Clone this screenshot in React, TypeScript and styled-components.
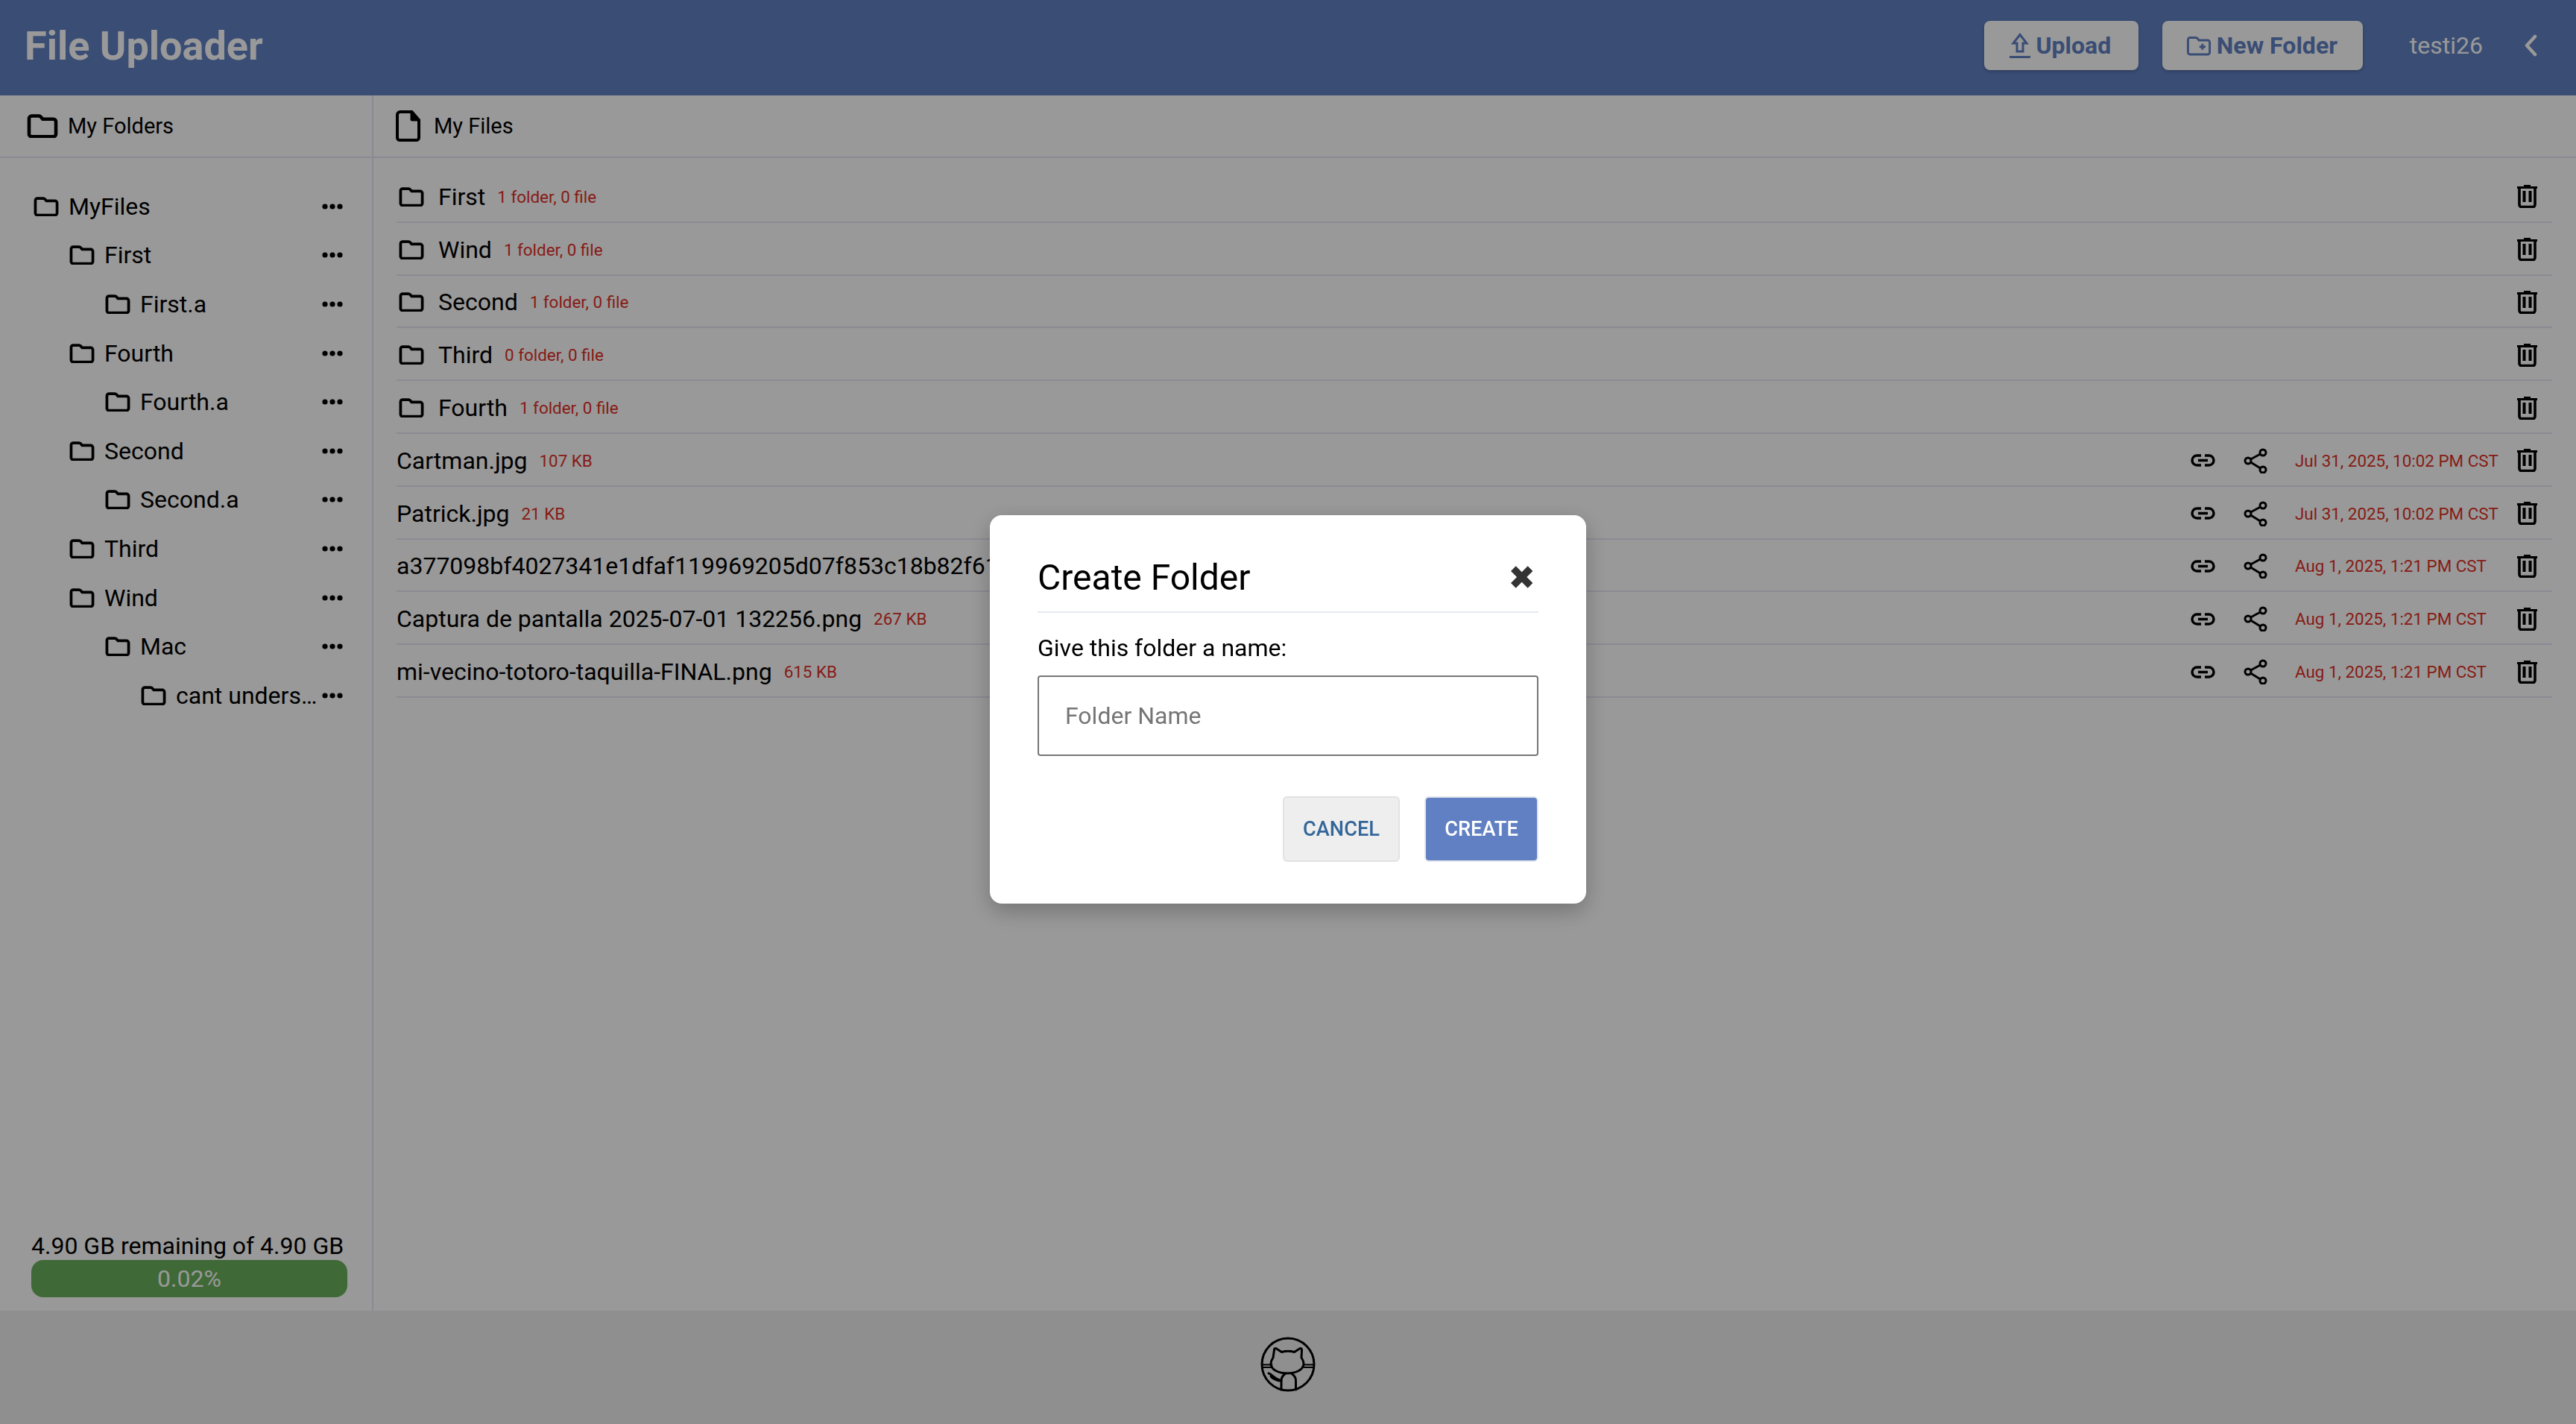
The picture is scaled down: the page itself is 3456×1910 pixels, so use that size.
import React from 'react';
import styled, { createGlobalStyle } from 'styled-components';

const GlobalStyle = createGlobalStyle`
  * { box-sizing: border-box; }
  html, body { margin: 0; padding: 0; background: #fff; }
  body { font-family: Roboto, "Liberation Sans", sans-serif; color: #000; }
`;

const Page = styled.div`
  height: 1910px;
  display: flex;
  flex-direction: column;
`;

const Header = styled.header`
  height: 128px;
  flex: none;
  background: #6180c3;
  display: flex;
  align-items: center;
  padding: 0 52px 6px 33px;
  color: #fff;
`;

const Logo = styled.h1`
  margin: 0;
  font-size: 54px;
  font-weight: 700;
  flex: 1;
`;

const HeaderButton = styled.button<{ $width: number }>`
  width: ${(p) => p.$width}px;
  height: 66px;
  background: #fff;
  color: #6180c3;
  border: none;
  border-radius: 8px;
  font: 700 32px Roboto, sans-serif;
  display: flex;
  align-items: center;
  justify-content: center;
  gap: 7px;
  padding: 0 2px 0 0;
  margin-right: 32px;
  box-shadow: 0 2px 4px rgba(0, 0, 0, 0.2);
`;

const UserName = styled.span`
  font-size: 32px;
  margin-left: 31px;
  margin-right: 55px;
`;

const Content = styled.div`
  flex: 1;
  display: flex;
  min-height: 0;
`;

const Sidebar = styled.aside`
  width: 501px;
  flex: none;
  border-right: 2px solid #e6e6f5;
  display: flex;
  flex-direction: column;
`;

const PanelTitle = styled.div<{ $gap: number; $left: number }>`
  height: 84px;
  flex: none;
  border-bottom: 2px solid #e6e6f5;
  display: flex;
  align-items: center;
  gap: ${(p) => p.$gap}px;
  padding-left: ${(p) => p.$left}px;
  font-size: 29px;
`;

const Tree = styled.ul`
  list-style: none;
  margin: 0;
  padding: 32px 0 0;
  flex: 1;
`;

const TreeRow = styled.li<{ $depth: number }>`
  height: 65.6px;
  display: flex;
  align-items: center;
  padding-left: ${(p) => 45 + p.$depth * 48}px;
  padding-right: 39px;
  font-size: 32px;
`;

const TreeLabel = styled.span`
  flex: 1;
  min-width: 0;
  margin-left: 13px;
  white-space: nowrap;
  overflow: hidden;
  text-overflow: ellipsis;
`;

const Storage = styled.div`
  flex: none;
  padding: 0 33px 18px 42px;
  font-size: 32px;
`;

const StorageText = styled.div`
  height: 38px;
  line-height: 38px;
  white-space: nowrap;
`;

const StorageBar = styled.div`
  height: 50px;
  border-radius: 16px;
  background: #69af5d;
  color: #fff;
  display: flex;
  align-items: center;
  justify-content: center;
`;

const Main = styled.main`
  flex: 1;
  min-width: 0;
  display: flex;
  flex-direction: column;
`;

const List = styled.div`
  padding: 16px 32px 0 31px;
`;

const Row = styled.div`
  height: 70.8px;
  border-bottom: 2px solid #e6e6f5;
  display: flex;
  align-items: center;
  padding: 3px 20px 0 0;
  font-size: 32px;
  white-space: nowrap;
`;

const RowFolder = styled.span`
  margin-left: 3px;
  display: flex;
`;

const FolderName = styled.span`
  margin-left: 19px;
`;

const Meta = styled.span`
  margin-left: 16px;
  font-size: 22.4px;
  color: #df3026;
  flex: 1;
`;

const DateText = styled.span`
  width: 298px;
  font-size: 22.4px;
  color: #df3026;
  flex: none;
`;

const ActionSlot = styled.span<{ $width: number }>`
  width: ${(p) => p.$width}px;
  flex: none;
  display: flex;
  justify-content: flex-start;
`;

const RowIcons = styled.span`
  display: flex;
  align-items: center;
`;

const Footer = styled.footer`
  height: 152px;
  flex: none;
  background: #eee;
  display: flex;
  align-items: center;
  justify-content: center;
  padding-bottom: 8px;
`;

const Overlay = styled.div`
  position: fixed;
  inset: 0;
  background: rgba(0, 0, 0, 0.4);
  display: flex;
  align-items: center;
  justify-content: center;
  padding-bottom: 7px;
`;

const Modal = styled.div`
  width: 800px;
  height: 521px;
  background: #fff;
  border-radius: 16px;
  padding: 0 64px;
  box-shadow: 0 10px 30px rgba(0, 0, 0, 0.25);
`;

const ModalHead = styled.div`
  height: 131px;
  border-bottom: 2px solid #e5e9ee;
  display: flex;
  align-items: flex-end;
  justify-content: space-between;
  padding-bottom: 17px;
`;

const ModalTitle = styled.h2`
  margin: 0;
  font-size: 48px;
  font-weight: 400;
`;

const CloseGlyph = styled.span`
  font: 44px/56px "DejaVu Sans", sans-serif;
  color: #333;
  margin-right: 4px;
`;

const FieldLabel = styled.label`
  display: block;
  margin-top: 28px;
  font-size: 32px;
  line-height: 38px;
`;

const NameInput = styled.input`
  display: block;
  width: 100%;
  height: 108px;
  margin-top: 18px;
  padding: 0 35px;
  border: 2px solid #767676;
  border-radius: 4px;
  outline: none;
  font: 32px Roboto, sans-serif;
  &::placeholder {
    color: #757575;
  }
`;

const ModalActions = styled.div`
  display: flex;
  justify-content: flex-end;
  gap: 33px;
  margin-top: 54px;
`;

const ModalButton = styled.button<{ $primary?: boolean }>`
  height: 88px;
  width: ${(p) => (p.$primary ? 153 : 157)}px;
  padding: 0;
  border: 2px solid ${(p) => (p.$primary ? '#e3e6ee' : '#e2e2e4')};
  border-radius: 6px;
  background: ${(p) => (p.$primary ? '#6180c3' : '#eee')};
  color: ${(p) => (p.$primary ? '#fff' : '#336699')};
  font: 500 27.2px Roboto, sans-serif;
`;

const Line = styled.svg<{ $w: number; $h: number }>`
  width: ${(p) => p.$w}px;
  height: ${(p) => p.$h}px;
  flex: none;
  display: block;
  fill: none;
  stroke: currentColor;
`;

const Dots = styled.svg`
  width: 28px;
  height: 8px;
  flex: none;
  display: block;
  fill: #000;
`;

const FOLDER =
  'M3 6a3.5 3.5 0 0 1 3.5-3.5h9.6a3.5 3.5 0 0 1 2.6 1.2l2.6 3h14.2a3.5 3.5 0 0 1 3.5 3.5v16.6a3.5 3.5 0 0 1-3.5 3.5h-29A3.5 3.5 0 0 1 3 26.3z';

const FolderIcon = ({ w = 34, h = 26 }: { w?: number; h?: number }) => (
  <Line $w={w} $h={h} viewBox="0 0 42 32" strokeWidth="4.6">
    <path d={FOLDER} />
  </Line>
);

const FileIcon = () => (
  <Line $w={33} $h={42} viewBox="0 0 33 42" strokeWidth="4">
    <path d="M6 2h15.5L31 13v23.5a3.5 3.5 0 0 1-3.5 3.5H5.5A3.5 3.5 0 0 1 2 36.5V6a4 4 0 0 1 4-4z" />
    <path d="M20 3v9.5a1.5 1.5 0 0 0 1.5 1.5H31z" fill="currentColor" strokeWidth="1" />
  </Line>
);

const TrashIcon = () => (
  <Line $w={27} $h={31} viewBox="0 0 27 31" strokeWidth="3">
    <path d="M9 1h9M0 3.5h27" strokeWidth="3" />
    <path d="M3 4v22.5a3 3 0 0 0 3 3h15a3 3 0 0 0 3-3V4" strokeWidth="3.6" />
    <path d="M9.5 8v15M17.5 8v15" strokeWidth="4" />
  </Line>
);

const LinkIcon = () => (
  <Line $w={33} $h={17} viewBox="0 0 33 17" strokeWidth="3.4">
    <path d="M14 2H8.5a6.5 6.5 0 0 0 0 13H14M19 2h5.5a6.5 6.5 0 0 1 0 13H19M10 8.5h13" />
  </Line>
);

const ShareIcon = () => (
  <Line $w={32} $h={34} viewBox="0 0 32 34" strokeWidth="3">
    <circle cx="26" cy="6" r="4" />
    <circle cx="6" cy="17" r="4" />
    <circle cx="26" cy="29" r="4" />
    <path d="M9.5 15 22.5 8M9.5 19l13 8" />
  </Line>
);

const DotsIcon = () => (
  <Dots viewBox="0 0 28 8">
    <circle cx="4" cy="4" r="3.6" />
    <circle cx="14" cy="4" r="3.6" />
    <circle cx="24" cy="4" r="3.6" />
  </Dots>
);

const UploadIcon = () => (
  <Line $w={28} $h={34} viewBox="0 0 28 34" strokeWidth="3">
    <path d="M14 2.5 23 14h-5v11h-8V14H5z" />
    <path d="M0 32.5h28" />
  </Line>
);

const NewFolderIcon = () => (
  <Line $w={34} $h={27} viewBox="0 0 42 32" strokeWidth="3.6">
    <path d={FOLDER} />
    <path d="M27 12.5v10M22 17.5h10" />
  </Line>
);

const ChevronIcon = () => (
  <Line $w={18} $h={30} viewBox="0 0 18 30" strokeWidth="4.5" strokeLinecap="round" strokeLinejoin="round">
    <path d="M15 3 4 15l11 12" />
  </Line>
);

// outlined octocat inside a ring, traced from the footer of the app
const GithubIcon = () => (
  <Line $w={74} $h={74} viewBox="0 0 74 74" strokeWidth="3" strokeLinejoin="round" strokeLinecap="round">
    <circle cx="37" cy="37" r="35" />
    <path d="M18.5 18c-.5-2 1.500-3 3-2l7 4.500c5-1.500 12-1.500 17 0l7-4.500c1.500-1 3.500 0 3 2l-.5 10c2 3 3 6 3 8 0 8-10 13-22 13s-22-5-22-13c0-2 1-5 3-8z" />
    <path d="M28 71V59c0-5 3-8 6-10M47.500 71V59c0-5-3-8-6-10" />
    <path d="M11 49c5 1 6 7 17 10M14 53c2 3 6 5 11 6" />
    <path d="M2 37.500h13.500M2 41h13.500M58.500 37.500H72M58.500 41H72" strokeWidth="1.800" />
  </Line>
);

const tree: [string, number][] = [
  ['MyFiles', 0],
  ['First', 1],
  ['First.a', 2],
  ['Fourth', 1],
  ['Fourth.a', 2],
  ['Second', 1],
  ['Second.a', 2],
  ['Third', 1],
  ['Wind', 1],
  ['Mac', 2],
  ['cant understand this', 3],
];

const folders = [
  ['First', '1 folder, 0 file'],
  ['Wind', '1 folder, 0 file'],
  ['Second', '1 folder, 0 file'],
  ['Third', '0 folder, 0 file'],
  ['Fourth', '1 folder, 0 file'],
];

const files = [
  ['Cartman.jpg', '107 KB', 'Jul 31, 2025, 10:02 PM CST'],
  ['Patrick.jpg', '21 KB', 'Jul 31, 2025, 10:02 PM CST'],
  ['a377098bf4027341e1dfaf119969205d07f853c18b82f61a0c.jpg', '98 KB', 'Aug 1, 2025, 1:21 PM CST'],
  ['Captura de pantalla 2025-07-01 132256.png', '267 KB', 'Aug 1, 2025, 1:21 PM CST'],
  ['mi-vecino-totoro-taquilla-FINAL.png', '615 KB', 'Aug 1, 2025, 1:21 PM CST'],
];

const App: React.FC = () => {
  return (
    <Page>
      <GlobalStyle />
      <Header>
        <Logo>File Uploader</Logo>
        <HeaderButton $width={207}>
          <UploadIcon />
          Upload
        </HeaderButton>
        <HeaderButton $width={269}>
          <NewFolderIcon />
          New Folder
        </HeaderButton>
        <UserName>testi26</UserName>
        <ChevronIcon />
      </Header>
      <Content>
        <Sidebar>
          <PanelTitle $gap={13} $left={36}>
            <FolderIcon w={42} h={32} />
            My Folders
          </PanelTitle>
          <Tree>
            {tree.map(([name, depth]) => (
              <TreeRow key={name} $depth={depth}>
                <FolderIcon />
                <TreeLabel>{name}</TreeLabel>
                <DotsIcon />
              </TreeRow>
            ))}
          </Tree>
          <Storage>
            <StorageText>4.90 GB remaining of 4.90 GB</StorageText>
            <StorageBar>0.02%</StorageBar>
          </Storage>
        </Sidebar>
        <Main>
          <PanelTitle $gap={18} $left={30}>
            <FileIcon />
            My Files
          </PanelTitle>
          <List>
            {folders.map(([name, info]) => (
              <Row key={name}>
                <RowFolder>
                  <FolderIcon />
                </RowFolder>
                <FolderName>{name}</FolderName>
                <Meta>{info}</Meta>
                <TrashIcon />
              </Row>
            ))}
            {files.map(([name, size, date]) => (
              <Row key={name}>
                {name}
                <Meta>{size}</Meta>
                <RowIcons>
                  <ActionSlot $width={71}>
                    <LinkIcon />
                  </ActionSlot>
                  <ActionSlot $width={69}>
                    <ShareIcon />
                  </ActionSlot>
                  <DateText>{date}</DateText>
                  <TrashIcon />
                </RowIcons>
              </Row>
            ))}
          </List>
        </Main>
      </Content>
      <Footer>
        <GithubIcon />
      </Footer>
      <Overlay>
        <Modal>
          <ModalHead>
            <ModalTitle>Create Folder</ModalTitle>
            <CloseGlyph>✖</CloseGlyph>
          </ModalHead>
          <FieldLabel>Give this folder a name:</FieldLabel>
          <NameInput placeholder="Folder Name" />
          <ModalActions>
            <ModalButton>CANCEL</ModalButton>
            <ModalButton $primary>CREATE</ModalButton>
          </ModalActions>
        </Modal>
      </Overlay>
    </Page>
  );
};

export default App;
